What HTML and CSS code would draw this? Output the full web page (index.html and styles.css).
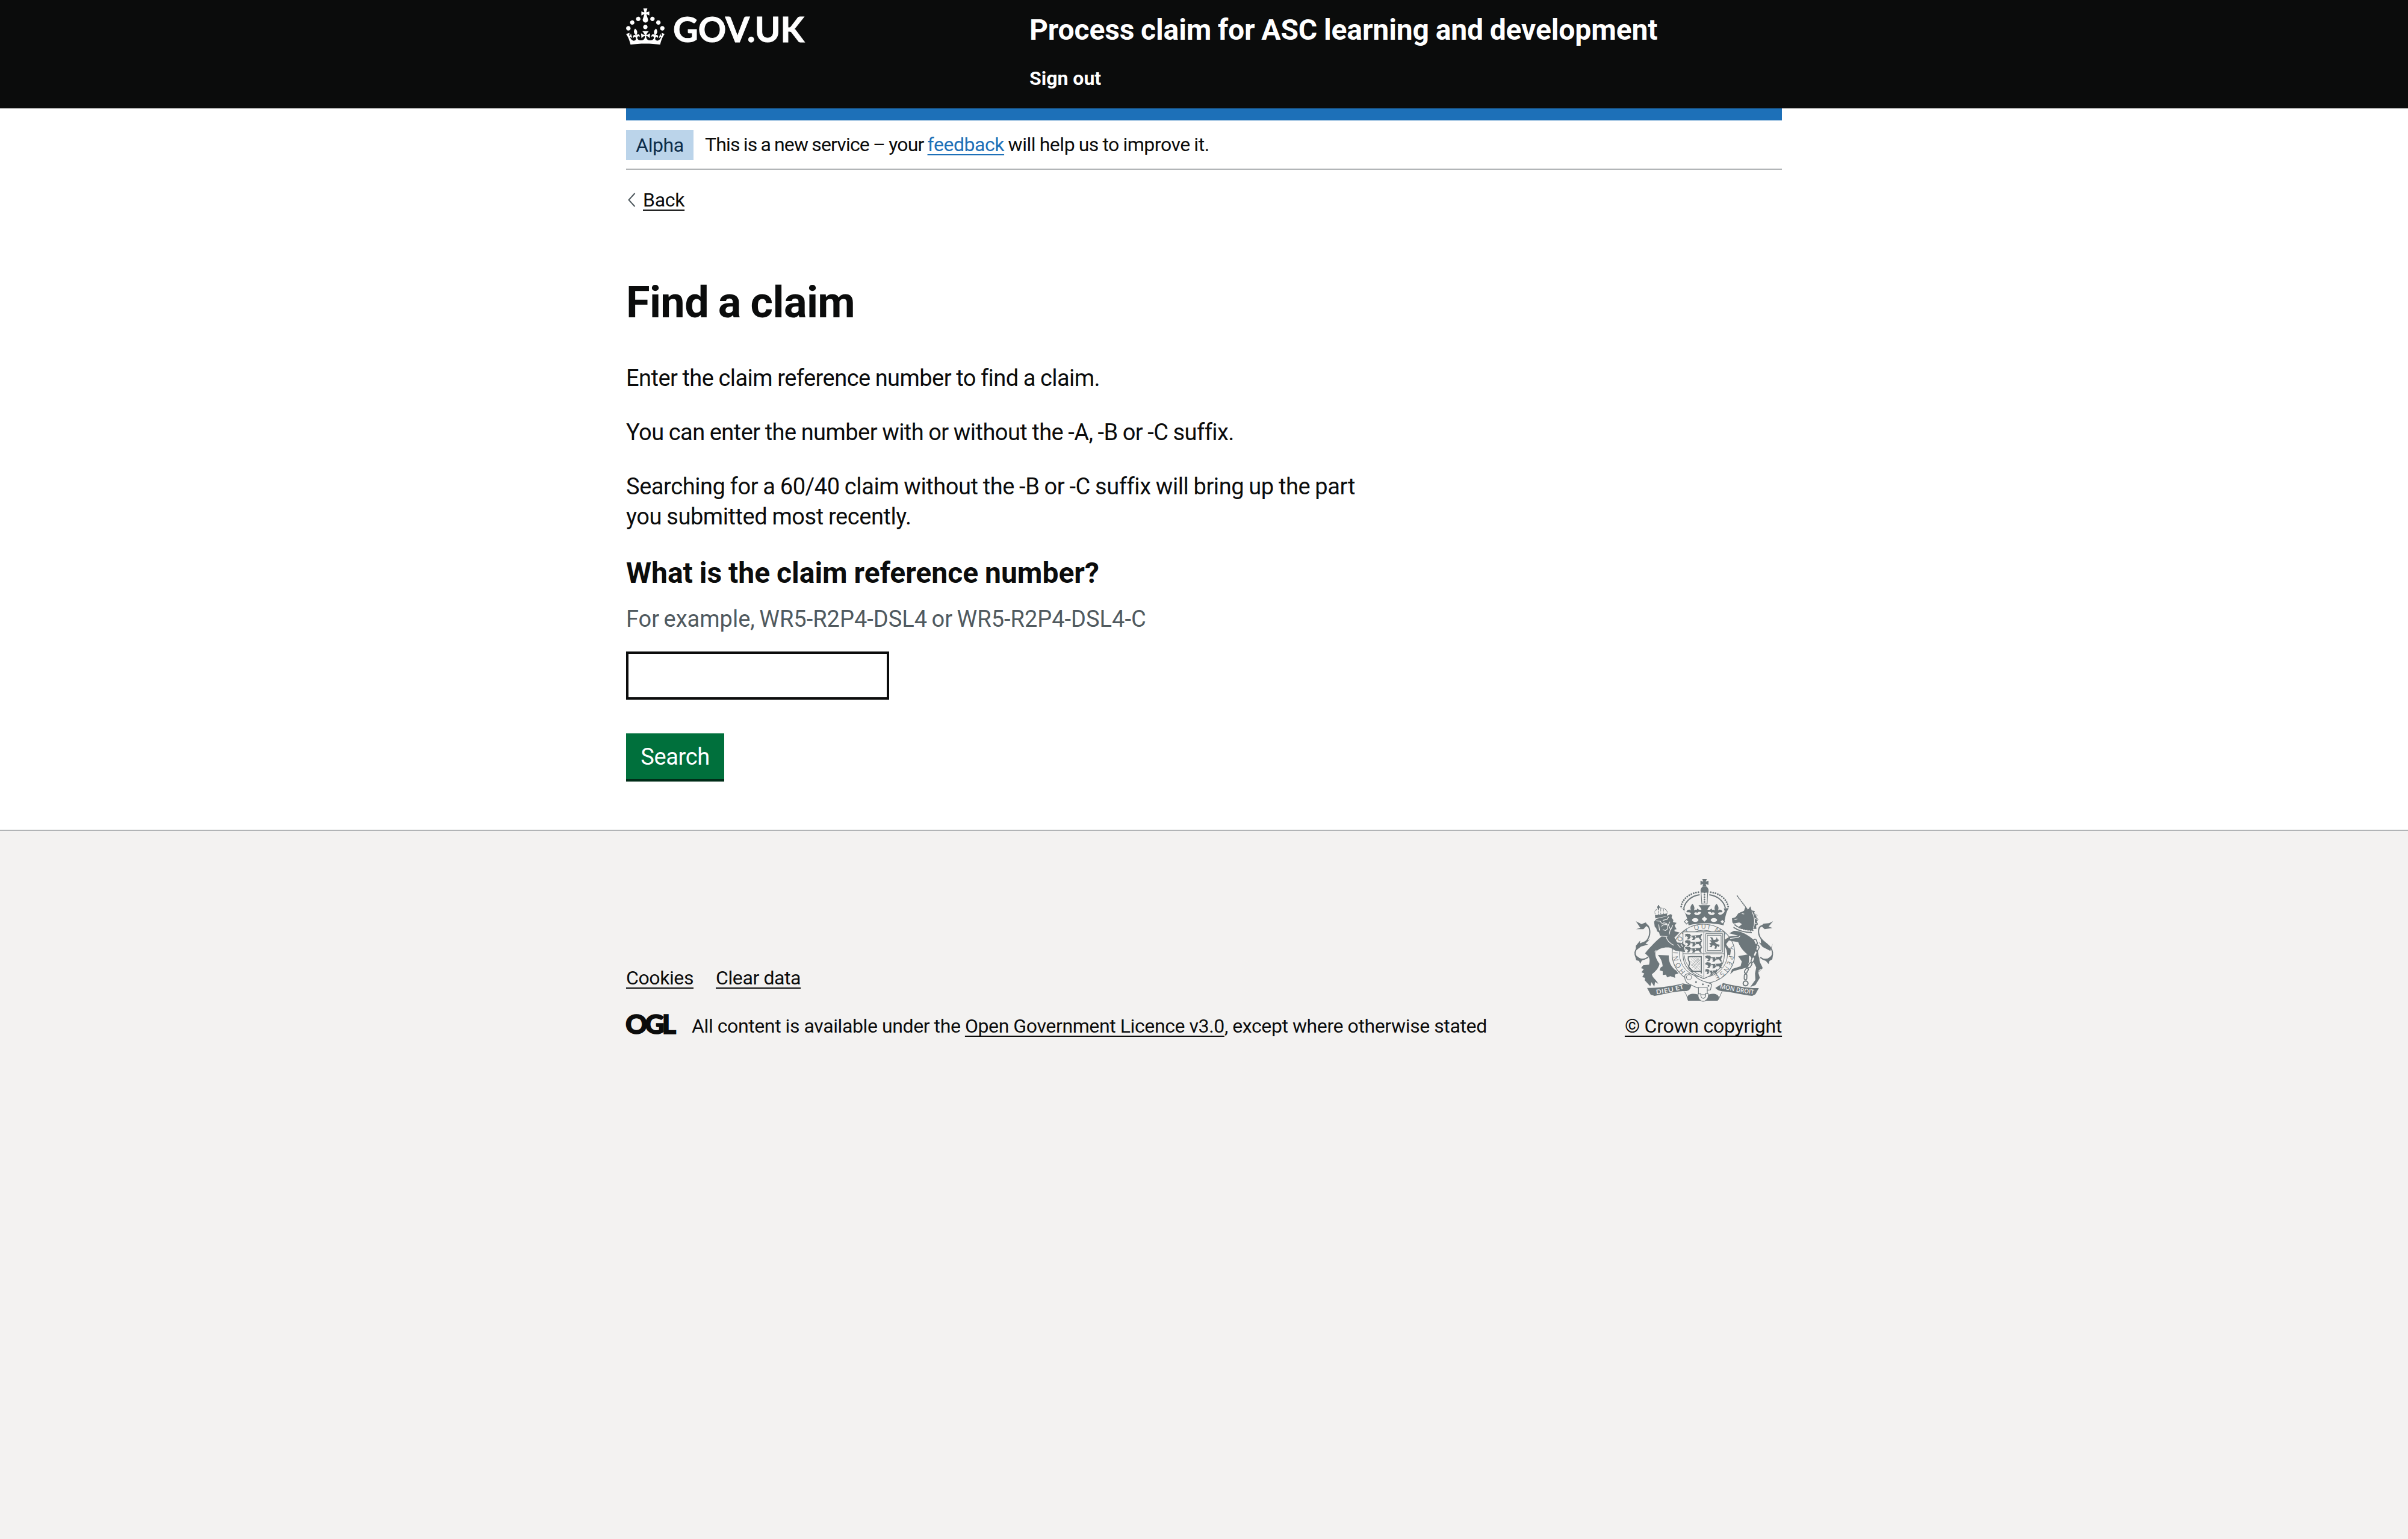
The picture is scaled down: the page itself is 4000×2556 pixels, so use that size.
FILE: index.html
```html
<!DOCTYPE html>
<html lang="en">
<head>
<meta charset="utf-8">
<title>Find a claim - Process claim for ASC learning and development - GOV.UK</title>
<link rel="stylesheet" href="styles.css">
</head>
<body>
<header class="header">
  <div class="container header-inner">
    <a class="logo" href="#" aria-label="GOV.UK">
      <svg class="logo-crown" viewBox="0 0 32 30" aria-hidden="true"><path fill="currentColor" d="M22.6 10.4c-1 .4-2-.1-2.4-1-.4-.9.1-2 1-2.4.9-.4 2 .1 2.4 1s-.1 2-1 2.4m-5.9 6.7c-.9.4-2-.1-2.4-1-.4-.9.1-2 1-2.4.9-.4 2 .1 2.4 1s-.1 2-1 2.4m10.8-3.7c-1 .4-2-.1-2.4-1-.4-.9.1-2 1-2.4.9-.4 2 .1 2.4 1s0 2-1 2.4m3.3 4.8c-1 .4-2-.1-2.4-1-.4-.9.1-2 1-2.4.9-.4 2 .1 2.4 1s-.1 2-1 2.4M17 4.7l2.3 1.2V2.5l-2.3.7-.2-.2.9-3h-3.4l.9 3-.2.2c-.1.1-2.3-.7-2.3-.7v3.4L15 4.7c.1.1.1.2.2.2l-1.3 4c-.1.2-.1.4-.1.6 0 1.1.8 2 1.9 2.2h.7c1-.2 1.9-1.1 1.9-2.1 0-.2 0-.4-.1-.6l-1.3-4c-.1-.2 0-.2.1-.3m-7.6 5.7c.9.4 2-.1 2.4-1 .4-.9-.1-2-1-2.4-.9-.4-2 .1-2.4 1s0 2 1 2.4m-5 3c.9.4 2-.1 2.4-1 .4-.9-.1-2-1-2.4-.9-.4-2 .1-2.4 1s.1 2 1 2.4m-3.2 4.8c.9.4 2-.1 2.4-1 .4-.9-.1-2-1-2.4-.9-.4-2 .1-2.4 1s0 2 1 2.4m14.8 11c4.4 0 8.6.3 12.3.8 1.1-4.5 2.4-7 3.7-8.8l-2.5-.9c.2 1.3.3 1.9 0 2.7-.4-.4-.8-1.1-1.1-2.3l-1.2 4c.7-.5 1.3-.8 2-.9-1.1 2.5-2.6 3.1-3.5 3-1.1-.2-1.7-1.2-1.5-2.1.3-1.2 1.5-1.5 2.1-.1 1.1-2.3-.8-3-2-2.3 1.9-1.9 2.1-3.5.6-5.6-2.1 1.6-2.1 3.2-1.2 5.5-1.2-1.4-3.2-.6-2.5 1.6.9-1.4 2.1-.5 1.9.8-.2 1.1-1.7 2.1-3.5 1.9-2.7-.2-2.9-2.1-2.9-3.6.7-.1 1.9.5 2.9 1.9l.4-4.3c-1.1 1.1-2.1 1.4-3.2 1.4.4-1.2 2.1-3 2.1-3h-5.4s1.7 1.9 2.1 3c-1.1 0-2.1-.2-3.2-1.4l.4 4.3c1-1.4 2.2-2 2.9-1.9-.1 1.5-.2 3.4-2.9 3.6-1.9.2-3.4-.8-3.5-1.9-.2-1.3 1-2.2 1.9-.8.7-2.3-1.2-3-2.5-1.6.9-2.2.9-3.9-1.2-5.5-1.5 2-1.3 3.7.6 5.6-1.2-.7-3.1 0-2 2.3.6-1.4 1.8-1.1 2.1.1.2.9-.3 1.9-1.5 2.1-.9.2-2.4-.5-3.5-3 .6 0 1.2.3 2 .9l-1.2-4c-.3 1.1-.7 1.9-1.1 2.3-.3-.8-.2-1.4 0-2.7l-2.9.9C1.3 23 2.6 25.5 3.7 30c3.7-.5 7.9-.8 12.3-.8"/></svg>
      <svg class="logo-text" viewBox="0 0 220 60" aria-hidden="true"><text x="-2" y="56" textLength="218" lengthAdjust="spacingAndGlyphs">GOV.UK</text></svg>
    </a>
    <div class="header-content">
      <a class="service-name" href="#">Process claim for ASC learning and development</a>
      <a class="nav-link" href="#">Sign out</a>
    </div>
  </div>
</header>

<div class="container">
  <div class="phase-banner">
    <strong class="tag">Alpha</strong>
    <span class="phase-text">This is a new service – your <span class="phase-end"><a class="link" href="#">feedback</a> will help us to improve it.</span></span>
  </div>
  <a class="back" href="#">
    <svg class="back-arrow" viewBox="0 0 14 24" aria-hidden="true"><path d="M12.5 1L2.5 12l10 11" fill="none" stroke="#505a5f" stroke-width="2"/></svg>
    <span class="back-text">Back</span>
  </a>
  <main class="main">
    <h1 class="heading">Find a claim</h1>
    <p class="body-text">Enter the claim reference number to find a claim.</p>
    <p class="body-text">You can enter the number with or without the -A, -B or -C suffix.</p>
    <p class="body-text body-text-long">Searching for a 60/40 claim without the -B or -C suffix will bring up the part you submitted most recently.</p>
    <form class="form">
      <label class="label" for="reference">What is the claim reference number?</label>
      <div class="hint">For example, WR5-R2P4-DSL4 or WR5-R2P4-DSL4-C</div>
      <input class="input" id="reference" type="text">
      <button class="button" type="button">Search</button>
    </form>
  </main>
</div>

<footer class="footer">
  <div class="container footer-inner">
    <div class="footer-main">
      <div class="footer-links"><a class="footer-link" href="#">Cookies</a><a class="footer-link" href="#">Clear data</a></div>
      <div class="licence">
        <svg class="ogl" viewBox="0 0 82 34" role="img" aria-label="OGL"><text x="-1" y="33" textLength="80" lengthAdjust="spacingAndGlyphs">OGL</text></svg>
        <span class="licence-text">All content is available under the <a class="footer-link" href="#">Open Government Licence v3.0</a>, except where otherwise stated</span>
      </div>
    </div>
    <div class="crown-block">
      <svg class="crest" viewBox="57 60 783 612" aria-hidden="true">
        <defs>
          <path id="garter" d="M360 521A128 124 0 1 1 503 544"/>
          <g id="passant"><path class="fill" d="M0 4l10-4 14 2 6 8 44-3 8-7 4 3-5 9-2 11 6 8h-9l-8-11-14 1-8 10h-11l5-9-12-5-8 12H8l8-9-8-7-8 3 3-6-4-4z"/><path class="cut" d="M26 14l12 4M50 10l4 8"/></g>
        </defs>
        <!-- garter -->
        <ellipse class="plate" cx="449" cy="432" rx="156" ry="147"/>
        <ellipse class="line" cx="449" cy="432" rx="120" ry="117"/>
        <text class="motto"><textPath href="#garter" textLength="636">HONI SOIT QUI MAL Y PENSE</textPath></text>
        <!-- shield -->
        <path class="plate" d="M347 323H553V440C552 500 505 535 450 556C395 535 348 500 347 440Z"/>
        <path class="line" d="M451 323V556M347 432H553M354 440C356 490 400 525 444 545"/>
        <use href="#passant" x="357" y="332"/><use href="#passant" x="357" y="364"/><use href="#passant" x="357" y="396"/>
        <use href="#passant" x="458" y="440"/><use href="#passant" x="458" y="474"/><use href="#passant" transform="translate(458 508) scale(.7 .9)"/>
        <path class="line" d="M460 332h85v92h-85zM468 340h69v76h-69z"/>
        <path class="fill" d="M482 348l12 4 6 12 12-3 3-12 5 12 8 2-10 10-12 2 10 9 14 3-4 12-9-6-4 14h-9l3-14-12-4-6 11-11-3 9-8-10-7 12-6-10-12 12 2z"/>
        <path class="thick" d="M371 448L390 446 438 446 438 530M375 448C366 468 390 472 376 492C370 506 392 505 390 520L436 520"/>
        <path class="thin" d="M386 456l46 44M394 452l38 36M404 452l28 26M384 468l48 46M388 484l30 28M414 452l18 16M432 460l-40 44M428 452l-40 40M432 478l-30 34"/>
        <!-- crown -->
        <path class="fill" d="M443 60h23l-6 13 14-5v21l-14-5 4 13h-20l4-13-14 5V68l14 5z"/>
        <path class="fill" d="M446 97h17c14 10 14 24 7 36h-31c-7-12-7-26 7-36z"/>
        <path class="plate" d="M437 126H470L467 184H441Z"/><path class="dots" d="M454 126v58"/>
        <path class="dots" d="M338 197C342 160 380 130 424 125M572 197C566 160 530 130 484 125"/>
        <path class="thick" d="M351 205C358 170 390 143 430 138M558 205C552 170 518 143 478 138"/>
        <path class="fill" d="M333 205l24 1-4 14c8 18 26 24 34 10-8-8-20 0-23-8 5-12 16-12 22-6-4-14-2-22 8-33 10 11 12 20 8 33 8-7 20-4 21 6-5 8-14 0-21 8 5 14 31 12 35-4-10-6-14-2-22 6l2-26c6 6 12 8 22 7-2-10-10-16-15-23h60c-5 7-13 13-15 23 10 1 16-1 22-7l2 26c-8-8-12-12-22-6 4 16 30 18 35 4-7-8-16 0-21-8 1-10 13-13 21-6-4-13-2-22 8-33 10 11 12 19 8 33 6-6 17-6 22 6-3 8-15 0-23 8 8 14 26 8 34-10l-5-14 25-1c-16 24-18 54-26 85-55-14-121-14-174 0-6-31-14-62-32-85z"/>
        <path class="plate" d="M365 261l11 11-11 12-11-12zM543 261l11 11-11 12-11-12z"/>
        <path class="blank" d="M454 247l14 12-14 13-14-13zM392 264a16 10 0 1 0 32 0 16 10 0 1 0-32 0M485 264a16 10 0 1 0 32 0 16 10 0 1 0-32 0"/>
        <!-- lion -->
        <path class="dots-small" d="M206 226C208 200 264 196 268 224M211 248L207 228M265 240l4-16M224 244v-36M236 240v-38M250 240v-34"/>
        <path class="fill" d="M219 196h12v8h-12zM222 190h6v22h-6zM208 240l58-8 3 12-60 12z"/>
        <path class="fill" d="M203 272l12-14 50-12 18-11 10 3-3 14 9 12-2 10 18 4-10 14 10 18-11 2 4 22-12 2-10 14-28-6-26-2-4-16-10-6-4-14-8-10z"/>
        <path class="cut" d="M214 268l20 2 6 10M246 266l22-6 8-12M240 284l12-6 16 4M240 296l8-8 20-2 2 22-10 8-14-4M282 272l-8 16 10 22-6 26M296 290l-10 22M226 286l4 30"/>
        <path class="fill" d="M240 346C216 366 185 396 158 430L175 446C184 462 180 474 178 486L148 490 138 504 152 508 140 524 154 530 144 548 158 552 156 564 184 594 190 574 204 596 208 572 224 582C214 560 194 552 192 534C208 522 226 504 230 482C216 464 206 444 210 424C230 402 260 398 284 402L308 416 358 424 352 402 360 390 340 378 318 376 304 352 330 326 306 320 268 348z"/>
        <path class="fill" d="M222 438L276 440C274 470 288 500 314 516L324 530 306 536 308 552 284 544 268 550 262 536 246 538 246 520 230 514 236 500 246 494C244 472 236 454 222 438z"/>
        <path class="cut" d="M262 344c4 20 18 36 40 46M320 384l14 18M336 382l10 16M206 424l8-10"/>
        <path class="thick" d="M174 448C150 470 106 458 108 425C112 396 150 388 170 362C186 338 184 308 172 292C160 278 140 286 134 300"/>
        <path class="fill" d="M112 270l28 14 22-8 14 26-12-8-14 16-36 0 20-8zM112 392l22-26-2 14 50-20-22 22 14 4-36 10-26 20zM106 436l28 20 28 2-20 8-8 16-6-14-14-4z"/>
        <!-- unicorn -->
        <path class="horn" d="M616 142L658 198"/>
        <path class="fill" d="M591 256l18-6 14-20 28-12 8-22 12 16 12-16 6 20 16 4-4 10 18 10-8 8 12 14-8 8 6 16-10 6 2 16-16 0-8 14-26-8-38-16 16-14-14-8-28 6-6-6z"/>
        <path class="cut" d="M640 232l12 2M604 262l14-4M690 222c12 20 18 50 8 84M704 236l12 6M706 256l14 6M704 278l12 6"/>
        <path class="thick" d="M604 286C620 304 660 314 698 316M598 300C630 322 664 326 690 326"/>
        <path class="beads" d="M606 296C630 312 660 318 694 320M596 300L582 340"/>
        <path class="fill" d="M578 330L600 318C630 316 668 334 706 368C724 398 718 430 728 456C726 476 742 490 744 504L722 526 730 552 708 588 682 598 708 562 706 530 712 500C704 484 694 464 684 446C660 430 636 410 622 374L576 366 562 384 572 400 586 412 582 440 568 436 564 414 554 390 556 362 580 346 622 342z"/>
        <path class="fill" d="M622 444L676 434 676 470 668 500 630 510 600 518 582 534 592 508 634 494 640 470z"/>
        <path class="cut" d="M582 356l42-6 8-8M720 380l-10 60M722 520l14-12"/>
        <path class="chain" d="M706 366L720 400 690 474 660 520 658 566"/>
        <path class="chain chain-core" d="M706 366L720 400 690 474 660 520 658 566"/>
        <circle class="thick" cx="659" cy="580" r="12"/>
        <path class="thick" d="M732 450C756 470 796 458 793 425C790 396 756 380 740 362C718 338 722 308 730 298C742 286 756 292 764 300"/>
        <path class="fill" d="M796 270l-20 10-28 2-22 24 14-10 14 14 38-6-18-8zM796 380l-12 24-14-18-36-28 2 22-12-6 20 24 38 20zM796 436l-26 20-30 4 20 8 14 16 4-16 14-8z"/>
        <!-- garter strap and ribbons -->
        <path class="plate" d="M356 548C352 526 392 526 412 548C440 574 470 572 490 584L484 612C450 618 398 594 372 580C360 572 356 560 356 548Z"/>
        <circle class="line" cx="377" cy="549" r="13"/><path class="dots" d="M412 573h2M446 584h2M474 592h2"/>
        <path class="plate" d="M424 600H468V636H424Z"/>
        <path class="fill" d="M168 602C230 604 300 592 346 580L388 588C386 612 372 620 352 618C300 620 260 632 206 642L186 636zM725 603C660 604 600 590 548 578L508 602C520 616 534 618 556 620C600 624 640 636 692 642L708 634z"/>
        <path class="line" d="M352 620C366 632 366 650 374 662M542 620C534 634 530 650 522 662"/>
        <path class="fill" d="M378 636C396 628 420 632 428 640L436 666H372C366 652 368 642 378 636zM516 636C500 628 476 632 468 640L458 666H520C530 652 526 642 516 636z"/>
        <path class="plate" d="M422 632C418 680 476 682 474 632L460 630C464 662 432 662 436 632Z"/>
        <path id="dieu" fill="none" d="M214 634Q290 624 358 604"/><path id="droit" fill="none" d="M530 604Q610 622 702 634"/>
        <text class="ribbon"><textPath href="#dieu" textLength="142" lengthAdjust="spacingAndGlyphs">DIEU ET</textPath></text>
        <text class="ribbon"><textPath href="#droit" textLength="172" lengthAdjust="spacingAndGlyphs">MON DROIT</textPath></text>
      </svg>
      <a class="footer-link copyright" href="#">© Crown copyright</a>
    </div>
  </div>
</footer>
</body>
</html>
```
FILE: styles.css
```css
* { box-sizing: border-box; }
html { background: #f3f2f1; }
body { margin: 0; background: #fff; color: #0b0c0c; font: 32px/40px Roboto, sans-serif; }
a { color: inherit; text-decoration: none; }
.container { width: 1920px; margin: 0 auto; }

.header { height: 180px; background: #0b0c0c; color: #fff; }
.header-inner { display: flex; }
.logo { display: flex; width: 670px; padding-top: 14px; }
.logo-crown { width: 64px; height: 60px; }
.logo-text { width: 220px; height: 60px; margin-left: 16px; overflow: visible; fill: #fff; stroke: #fff; stroke-width: 1; font: 700 58px Lato, sans-serif; }
.header-content { display: flex; flex-direction: column; align-items: flex-start; padding-top: 20px; font-weight: 700; }
.service-name { font-size: 48px; line-height: 60px; letter-spacing: -0.12px; word-spacing: -1px; }
.nav-link { margin-top: 30px; }

.phase-banner { display: flex; gap: 20px; height: 102px; padding-top: 16px; border-top: 20px solid #1d70b8; border-bottom: 2px solid #b1b4b6; }
.tag { width: 112px; height: 50px; padding-top: 5px; background: #bbd4ea; color: #0c2d4a; font-weight: 400; text-align: center; letter-spacing: -0.4px; }
.phase-text { margin-left: -1px; padding-top: 4px; letter-spacing: -0.85px; word-spacing: -1px; }
.phase-end { letter-spacing: -0.45px; }
.link { color: #1d70b8; }
.link, .footer-link, .back-text { text-decoration: underline; text-decoration-thickness: 2px; text-underline-offset: 5px; text-decoration-skip-ink: none; }

.back { display: flex; padding-top: 30px; }
.back-arrow { width: 14px; height: 24px; margin: 8px 12px 0 2px; }
.back-text { letter-spacing: -0.3px; }

.main { height: 1026px; padding-top: 113px; }
.heading { margin: 0 0 62px; font-size: 72px; line-height: 76px; letter-spacing: -0.6px; word-spacing: -1.5px; }
.body-text { margin: 0 0 40px; font-size: 38px; line-height: 50px; letter-spacing: -0.54px; word-spacing: -0.8px; }
.body-text-long { width: 1270px; letter-spacing: -0.43px; }
.form { display: flex; flex-direction: column; align-items: flex-start; }
.label { margin-top: -1px; font-size: 48px; font-weight: 700; line-height: 60px; letter-spacing: 0; word-spacing: -1px; }
.hint { margin: 21px 0 29px; color: #505a5f; font-size: 38px; line-height: 50px; letter-spacing: 0; word-spacing: -2px; }
.input { width: 437px; height: 80px; margin: 0; padding: 0 8px; border: 4px solid #0b0c0c; border-radius: 0; background: #fff; font: 38px Roboto, sans-serif; }
.button { width: 163px; height: 76px; margin: 56px 0 0; padding: 1px 0 0; border: 0; background: #00703c; box-shadow: 0 4px 0 #002d18; color: #fff; font: 38px/76px Roboto, sans-serif; letter-spacing: -0.4px; }

.footer { border-top: 2px solid #b1b4b6; background: #f3f2f1; }
.footer-inner { display: flex; justify-content: space-between; align-items: flex-end; padding-top: 80px; }
.footer-links { display: flex; gap: 37px; margin-bottom: 40px; letter-spacing: -0.4px; }
.licence { display: flex; gap: 27px; }
.licence-text { letter-spacing: -0.38px; word-spacing: -0.2px; }
.ogl { width: 82px; height: 34px; overflow: visible; fill: #0b0c0c; stroke: #0b0c0c; stroke-width: 1.6; font: 900 44px Lato, sans-serif; letter-spacing: -4px; }
.crown-block { display: flex; flex-direction: column; align-items: center; gap: 20px; width: 261px; }
.crest { width: 261px; height: 204px; }
.copyright { letter-spacing: -0.22px; white-space: nowrap; }

.fill { fill: #6d777b; }
.blank { fill: #f3f2f1; }
.plate { fill: #f3f2f1; stroke: #6d777b; stroke-width: 3.5; }
.line { fill: none; stroke: #6d777b; stroke-width: 3; }
.thick { fill: none; stroke: #6d777b; stroke-width: 6; }
.thin { fill: none; stroke: #6d777b; stroke-width: 1.6; }
.cut { fill: none; stroke: #f3f2f1; stroke-width: 3.5; }
.dots { fill: none; stroke: #6d777b; stroke-width: 9; stroke-linecap: round; stroke-dasharray: 0 12; }
.dots-small { fill: none; stroke: #6d777b; stroke-width: 3.5; stroke-dasharray: 4 3; }
.beads { fill: none; stroke: #f3f2f1; stroke-width: 6; stroke-dasharray: 7 5; }
.horn { fill: none; stroke: #6d777b; stroke-width: 5; stroke-dasharray: 9 2; }
.chain { fill: none; stroke: #6d777b; stroke-width: 18; stroke-linecap: round; stroke-dasharray: 14 18; }
.chain-core { stroke: #f3f2f1; stroke-width: 8; }
.motto { fill: #6d777b; font: 400 33px "Open Sans", sans-serif; }
.ribbon { fill: #f3f2f1; font: 600 31px "Open Sans", sans-serif; }
```
